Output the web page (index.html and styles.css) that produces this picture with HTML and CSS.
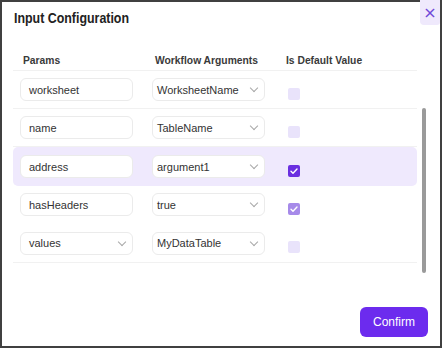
FILE: index.html
```html
<!DOCTYPE html>
<html lang="en">
<head>
  <meta charset="UTF-8" />
  <title>Input Configuration</title>
  <link rel="stylesheet" href="styles.css">
</head>
<body>
  <div class="frame">
    <div class="top">
      <h1>Input Configuration</h1>
      <button class="close">&times;</button>
    </div>

    <div class="body">
      <div class="list">
        <div class="grid head">
          <div>Params</div>
          <div>Workflow Arguments</div>
          <div class="head-check">Is Default Value</div>
        </div>

        <div class="grid row">
          <div class="field">worksheet</div>
          <div class="field select">WorksheetName <span class="chev"></span></div>
          <div><span class="check"></span></div>
        </div>

        <div class="grid row">
          <div class="field">name</div>
          <div class="field select">TableName <span class="chev"></span></div>
          <div><span class="check"></span></div>
        </div>

        <div class="grid row active">
          <div class="field">address</div>
          <div class="field select">argument1 <span class="chev"></span></div>
          <div><span class="check on">
            <svg viewBox="0 0 12 12" width="12" height="12"><path d="M3 6.2l2 2 4-4.2" fill="none" stroke="#fff" stroke-width="1.4" stroke-linecap="round" stroke-linejoin="round"/></svg>
          </span></div>
        </div>

        <div class="grid row">
          <div class="field">hasHeaders</div>
          <div class="field select">true <span class="chev"></span></div>
          <div><span class="check on dim">
            <svg viewBox="0 0 12 12" width="12" height="12"><path d="M3 6.2l2 2 4-4.2" fill="none" stroke="#fff" stroke-width="1.4" stroke-linecap="round" stroke-linejoin="round"/></svg>
          </span></div>
        </div>

        <div class="grid row last">
          <div class="field select">values <span class="chev"></span></div>
          <div class="field select">MyDataTable <span class="chev"></span></div>
          <div><span class="check"></span></div>
        </div>
      </div>

      <div class="scroll">
        <div class="thumb"></div>
      </div>
    </div>

    <div class="foot">
      <button class="confirm">Confirm</button>
    </div>
  </div>
</body>
</html>
```

FILE: styles.css
```css
body {
  margin: 0;
  background-color: #ffffff;
  font-family: "Liberation Sans", Arial, sans-serif;
  color: #333333;
}

.frame {
  position: relative;
  width: 442px;
  height: 348px;
  box-sizing: border-box;
  border: 2px solid #404040;
  background-color: #ffffff;
}

.top {
  height: 46px;
  padding: 6px 0 0 12px;
  box-sizing: border-box;
}

/* condensed title, no narrow face installed */
h1 {
  margin: 0;
  font-size: 15.5px;
  line-height: 19px;
  font-weight: bold;
  color: #222222;
  transform: scaleX(0.8);
  transform-origin: left center;
}

/* corner button sits over the frame edge */
.close {
  position: absolute;
  top: -2px;
  right: 0;
  width: 20px;
  height: 25px;
  padding: 0;
  border: none;
  border-radius: 0 0 3px 4px;
  background-color: #efe9fc;
  color: #7048d8;
  font-size: 16px;
  line-height: 22px;
  font-family: "DejaVu Sans", sans-serif;
}

.body {
  display: flex;
  height: 227px;
}

.list {
  width: 404px;
  margin-left: 11px;
}

.grid {
  display: grid;
  grid-template-columns: 132px 136px 1fr;
  align-items: center;
  padding-left: 7px;
}

.head {
  height: 23px;
  padding-top: 3px;
  box-sizing: border-box;
  border-bottom: 1px solid #f1f1f1;
  font-size: 10.3px;
  font-weight: bold;
  color: #3a3a3a;
}

.head > div {
  padding-left: 3px;
}

.head .head-check {
  padding-left: 0;
  margin-left: -2px;
}

.row {
  height: 38px;
  box-sizing: border-box;
  border-bottom: 1px solid #f1f1f1;
}

.row.active {
  height: 39px;
  border-bottom: none;
  border-radius: 5px;
  background-color: #efe9fd;
}

.row:nth-child(5) {
  border-bottom-color: transparent;
}

.row.last {
  height: 39px;
}

.field {
  display: flex;
  align-items: center;
  justify-content: space-between;
  width: 113px;
  height: 23px;
  box-sizing: border-box;
  padding: 0 8px;
  border: 1px solid #ebebeb;
  border-radius: 6px;
  background-color: #ffffff;
  font-size: 11px;
  color: #333333;
}

.select {
  padding-left: 4px;
  padding-right: 7px;
}

.grid > .select:first-child {
  padding-left: 8px;
}

.chev {
  flex: none;
  width: 5px;
  height: 5px;
  margin: 0 0 3px 0;
  border-right: 1px solid #a8a8a8;
  border-bottom: 1px solid #a8a8a8;
  transform: rotate(45deg);
}

.check {
  display: block;
  width: 12px;
  height: 12px;
  margin: 8px 0 0 0;
  border-radius: 2px;
  background-color: #e9e3fb;
}

.check svg {
  display: block;
}

.check.on {
  background-color: #6a2fe0;
}

.check.dim {
  background-color: #a68ae9;
}

.scroll {
  width: 4px;
  margin-left: 5px;
  padding-top: 60px;
}

.thumb {
  height: 165px;
  border-radius: 2px;
  background-color: #9a9a9a;
}

.foot {
  display: flex;
  justify-content: flex-end;
  padding: 32px 12px 0 0;
}

.confirm {
  width: 68px;
  height: 30px;
  border: none;
  border-radius: 6px;
  background-color: #6c2bee;
  color: #ffffff;
  font-family: "Liberation Sans", Arial, sans-serif;
  font-size: 12px;
}
```
